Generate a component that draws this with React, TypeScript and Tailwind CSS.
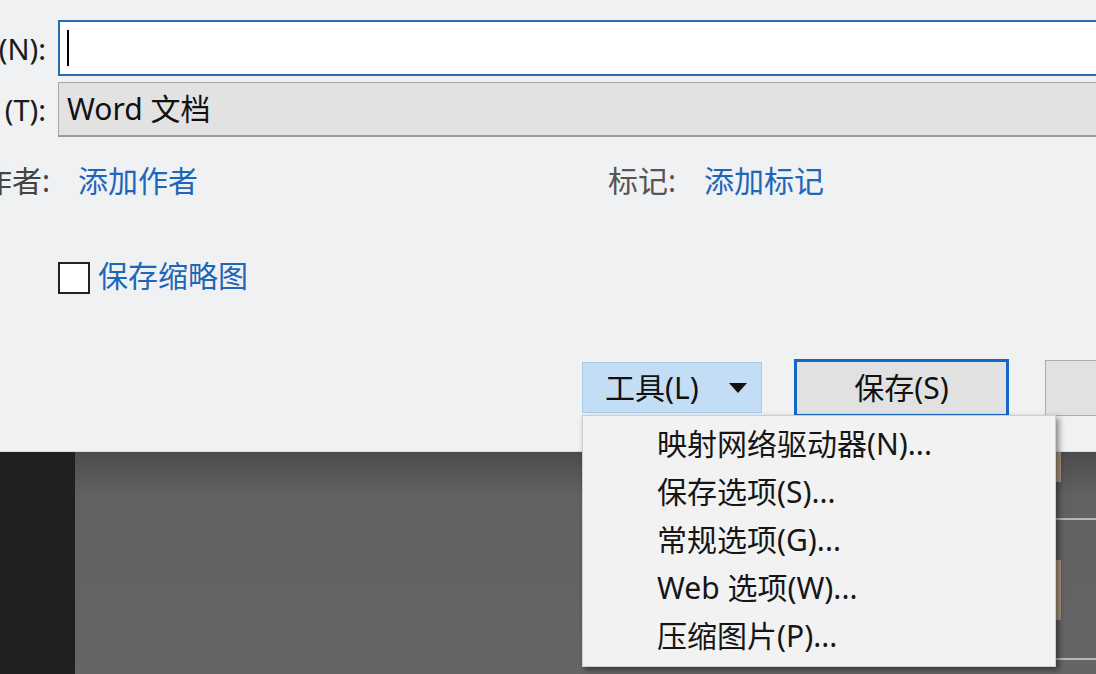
import React from "react";

const menuItems = [
  "映射网络驱动器(N)...",
  "保存选项(S)...",
  "常规选项(G)...",
  "Web 选项(W)...",
  "压缩图片(P)...",
];

const font = { fontFamily: '"Noto Sans", "Noto Sans CJK SC", sans-serif' };

export default function App() {
  return (
    <div className="relative w-[1096px] h-[674px] overflow-hidden bg-[#646466]" style={font}>
      {/* === DIALOG === */}
      <div className="h-[452px] bg-[#f0f1f3] pt-[20px] border-b border-[#d8d8d8]">
        {/* file name */}
        <div className="flex items-center">
          <div className="w-[46px] shrink-0 flex justify-end">
            <span className="whitespace-nowrap text-[29px] text-[#1a1a1a] leading-none">(N):</span>
          </div>
          <div className="ml-[12px] flex-1 h-[56px] -mr-[20px] bg-white border-2 border-[#2a6cb0] flex items-center pl-[7px]">
            <div className="w-[2px] h-[36px] bg-black" />
          </div>
        </div>

        {/* type */}
        <div className="flex items-center mt-[6px]">
          <div className="w-[46px] shrink-0 flex justify-end">
            <span className="whitespace-nowrap text-[29px] text-[#1a1a1a] leading-none">(T):</span>
          </div>
          <div className="ml-[12px] flex-1 h-[55px] -mr-[20px] bg-[#e2e2e3] border border-[#a8a8a8] border-b-2 border-b-[#9a9a9a] flex items-center pl-[8px]">
            <span className="text-[30px] text-[#111] leading-none">Word 文档</span>
          </div>
        </div>

        {/* author / tags */}
        <div className="flex items-center h-[44px] mt-[22px]">
          <div className="w-[608px] shrink-0 flex items-center">
            <div className="w-[50px] shrink-0 overflow-hidden flex justify-end">
              <span className="whitespace-nowrap text-[30px] text-[#444] leading-none">作者:</span>
            </div>
            <span className="ml-[28px] text-[30px] text-[#1e66b8] leading-none">添加作者</span>
          </div>
          <span className="w-[96px] shrink-0 text-[30px] text-[#555] leading-none">标记:</span>
          <span className="text-[30px] text-[#1e66b8] leading-none">添加标记</span>
        </div>

        {/* thumbnail */}
        <div className="flex items-center h-[32px] mt-[59px] pl-[58px]">
          <div className="w-[32px] h-[32px] shrink-0 bg-white border-2 border-[#222]" />
          <span className="ml-[8px] text-[30px] text-[#1e66b8] leading-none -mt-[5px]">保存缩略图</span>
        </div>

        {/* buttons */}
        <div className="flex items-start mt-[65px] pl-[582px]">
          <div className="shrink-0 mt-[3px] w-[180px] h-[51px] bg-[#c3ddf4] border border-[#a6cbeb] flex items-center pl-[22px]">
            <span className="text-[30px] text-[#111] leading-none">工具(L)</span>
            <svg className="ml-[30px]" width="18" height="10" viewBox="0 0 18 10">
              <path d="M0 0 H18 L9 10 Z" fill="#111" />
            </svg>
          </div>
          <div className="shrink-0 ml-[32px] w-[215px] h-[58px] bg-[#e1e1e1] border-[3px] border-[#1467c5] flex items-center justify-center">
            <span className="text-[30px] text-[#111] leading-none">保存(S)</span>
          </div>
          <div className="shrink-0 ml-[36px] mt-[1px] w-[80px] h-[56px] bg-[#e1e1e1] border border-[#adadad]" />
        </div>
      </div>

      {/* === BACKGROUND BELOW === */}
      <div className="flex h-[222px]">
        <div className="w-[75px] bg-[#202021]" />
        <div className="flex-1 bg-gradient-to-b from-[#4c4c4e] via-[#616163] via-20% to-[#656567] flex justify-end">
          <div className="w-[40px] flex flex-col">
            <div className="h-[30px] w-[5px] bg-[#a8957a]" />
            <div className="h-[36px]" />
            <div className="h-[2px] bg-[#b8b8b8]" />
            <div className="h-[40px]" />
            <div className="h-[60px] w-[5px] bg-[#a8957a]" />
            <div className="h-[38px]" />
            <div className="h-[2px] bg-[#b8b8b8]" />
          </div>
        </div>
      </div>

      {/* === DROPDOWN MENU === */}
      <div className="absolute left-[582px] top-[415px] w-[474px] bg-[#f2f2f3] border border-[#cfcfcf] shadow-[3px_3px_6px_rgba(0,0,0,0.45)] pt-[4px] pb-[6px]">
        {menuItems.map((item) => (
          <div key={item} className="h-[48px] flex items-center pl-[74px]">
            <span className="text-[30px] text-[#161616] leading-none whitespace-nowrap">{item}</span>
          </div>
        ))}
      </div>
    </div>
  );
}
